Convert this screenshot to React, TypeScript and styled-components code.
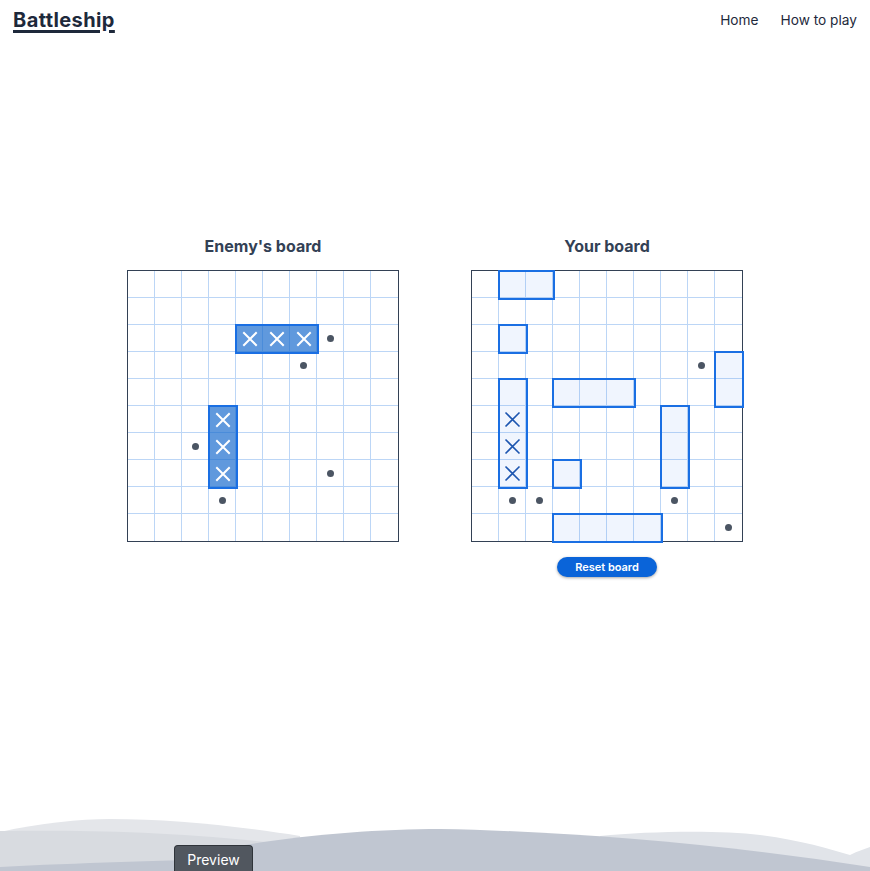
import React from "react";
import styled, { createGlobalStyle } from "styled-components";

const GlobalStyle = createGlobalStyle`
  html, body { margin: 0; padding: 0; background: #ffffff; }
  body { font-family: Inter, "Noto Sans", "Liberation Sans", sans-serif; color: #1e293b; }
  * { box-sizing: border-box; }
`;

const Page = styled.div`
  position: relative;
  min-height: 100vh;
  display: flex;
  flex-direction: column;
  overflow: hidden;
`;

const Header = styled.header`
  height: 40px;
  padding: 0 13px;
  display: flex;
  align-items: center;
  justify-content: space-between;
`;

const Logo = styled.a`
  font-size: 20px;
  font-weight: 700;
  color: #1e293b;
  text-decoration: underline;
  text-decoration-thickness: 3px;
  text-underline-offset: 3px;
  letter-spacing: 0.4px;
`;

const Nav = styled.nav`
  display: flex;
  gap: 22px;
`;

const NavLink = styled.a`
  font-size: 13.7px;
  color: #1e293b;
  text-decoration: none;
`;

const Main = styled.main`
  padding-top: 196px;
  display: flex;
  justify-content: center;
  gap: 72px;
`;

const Column = styled.section`
  display: flex;
  flex-direction: column;
  align-items: center;
`;

const Title = styled.h2`
  margin: 0 0 14px;
  font-size: 16px;
  line-height: 20px;
  font-weight: 700;
  color: #334155;
`;

const Board = styled.div`
  border: 1px solid #334155;
  display: grid;
  grid-template-columns: repeat(10, 27px);
  grid-template-rows: repeat(10, 27px);
`;

const Cell = styled.div<{ $r: number; $c: number }>`
  grid-row: ${(p) => p.$r + 1};
  grid-column: ${(p) => p.$c + 1};
  border-right: ${(p) => (p.$c < 9 ? "1px solid #bcd6f6" : "none")};
  border-bottom: ${(p) => (p.$r < 9 ? "1px solid #bcd6f6" : "none")};
`;

const Ship = styled.div<{ $hit?: boolean }>`
  z-index: 1;
  margin: -1px -2px -2px -1px;
  border: 2px solid #1a6fe3;
  background: ${(p) => (p.$hit ? "rgba(20,105,205,0.68)" : "rgba(59,130,246,0.08)")};
`;

const Mark = styled.div`
  z-index: 2;
  display: flex;
  align-items: center;
  justify-content: center;
`;

const Dot = styled.span`
  width: 7px;
  height: 7px;
  border-radius: 50%;
  background: #4b5563;
`;

const ResetButton = styled.button`
  margin-top: 15px;
  width: 100px;
  height: 20px;
  border: none;
  border-radius: 10px;
  background: #0a64d9;
  color: #ffffff;
  font-family: Inter, "Liberation Sans", sans-serif;
  font-size: 11px;
  font-weight: 600;
  box-shadow: 0 1px 3px rgba(0, 0, 0, 0.35);
  padding: 0;
`;

const Waves = styled.div`
  margin-top: auto;
  height: 60px;
  line-height: 0;
`;

const PreviewTab = styled.div`
  position: absolute;
  left: 174px;
  bottom: 0;
  width: 79px;
  height: 26px;
  background: #51575f;
  border: 1px solid #2f343a;
  border-bottom: none;
  border-radius: 4px 4px 0 0;
  color: #ffffff;
  font-size: 14px;
  display: flex;
  align-items: center;
  justify-content: center;
  padding-top: 1px;
`;

type ShipDef = { r: number; c: number; len: number; v?: boolean };
type BoardDef = {
  ships: ShipDef[];
  hits: [number, number][];
  misses: [number, number][];
  enemy?: boolean;
};

const enemy: BoardDef = {
  enemy: true,
  ships: [
    { r: 2, c: 4, len: 3 },
    { r: 5, c: 3, len: 3, v: true },
  ],
  hits: [
    [2, 4], [2, 5], [2, 6],
    [5, 3], [6, 3], [7, 3],
  ],
  misses: [[2, 7], [3, 6], [6, 2], [8, 3], [7, 7]],
};

const mine: BoardDef = {
  ships: [
    { r: 0, c: 1, len: 2 },
    { r: 2, c: 1, len: 1 },
    { r: 4, c: 1, len: 4, v: true },
    { r: 4, c: 3, len: 3 },
    { r: 3, c: 9, len: 2, v: true },
    { r: 5, c: 7, len: 3, v: true },
    { r: 7, c: 3, len: 1 },
    { r: 9, c: 3, len: 4 },
  ],
  hits: [[5, 1], [6, 1], [7, 1]],
  misses: [[3, 8], [8, 1], [8, 2], [8, 7], [9, 9]],
};

const Cross = ({ light }: { light?: boolean }) =>
  light ? (
    <svg width="16" height="16" viewBox="0 0 16 16">
      <path d="M2 2 L14 14 M14 2 L2 14" stroke="#ffffff" strokeWidth="2" strokeLinecap="square" />
    </svg>
  ) : (
    <svg width="17" height="17" viewBox="0 0 17 17">
      <path d="M1.5 1.5 L15.5 15.5 M15.5 1.5 L1.5 15.5" stroke="#1d56b0" strokeWidth="1.6" />
    </svg>
  );

const GameBoard = ({ def }: { def: BoardDef }) => {
  const cells = [];
  for (let r = 0; r < 10; r++)
    for (let c = 0; c < 10; c++) cells.push(<Cell key={`c${r}-${c}`} $r={r} $c={c} />);
  return (
    <Board>
      {cells}
      {def.ships.map((s, i) => (
        <Ship
          key={`s${i}`}
          $hit={def.enemy}
          style={{
            gridRow: s.v ? `${s.r + 1} / span ${s.len}` : `${s.r + 1}`,
            gridColumn: s.v ? `${s.c + 1}` : `${s.c + 1} / span ${s.len}`,
          }}
        />
      ))}
      {def.hits.map(([r, c]) => (
        <Mark key={`h${r}-${c}`} style={{ gridRow: r + 1, gridColumn: c + 1 }}>
          <Cross light={def.enemy} />
        </Mark>
      ))}
      {def.misses.map(([r, c]) => (
        <Mark key={`m${r}-${c}`} style={{ gridRow: r + 1, gridColumn: c + 1 }}>
          <Dot />
        </Mark>
      ))}
    </Board>
  );
};

export default function App() {
  return (
    <Page>
      <GlobalStyle />
      <Header>
        <Logo>Battleship</Logo>
        <Nav>
          <NavLink>Home</NavLink>
          <NavLink>How to play</NavLink>
        </Nav>
      </Header>
      <Main>
        <Column>
          <Title>Enemy's board</Title>
          <GameBoard def={enemy} />
        </Column>
        <Column>
          <Title>Your board</Title>
          <GameBoard def={mine} />
          <ResetButton>Reset board</ResetButton>
        </Column>
      </Main>
      <Waves>
        <svg width="100%" height="60" viewBox="0 0 870 60" preserveAspectRatio="none">
          <path d="M0 21 C 40 12, 80 8, 110 8 C 170 8, 230 14, 300 25 L 300 60 L 0 60 Z" fill="#e4e6ea" />
          <path d="M0 20 C 80 19, 180 20, 290 34 L 290 60 L 0 60 Z" fill="#d8dbe0" />
          <path d="M600 25 C 650 20, 720 19, 760 24 C 800 29, 830 38, 850 44 C 858 40, 865 38, 870 36 L 870 60 L 600 60 Z" fill="#e1e4e9" />
          <path d="M240 35 C 300 24, 380 18, 440 18 C 560 20, 720 32, 870 56 L 870 60 L 240 60 Z" fill="#c0c6d1" />
          <path d="M0 56 C 80 52, 160 50, 260 47 L 260 60 L 0 60 Z" fill="#c0c6d1" />
        </svg>
      </Waves>
      <PreviewTab>Preview</PreviewTab>
    </Page>
  );
}
